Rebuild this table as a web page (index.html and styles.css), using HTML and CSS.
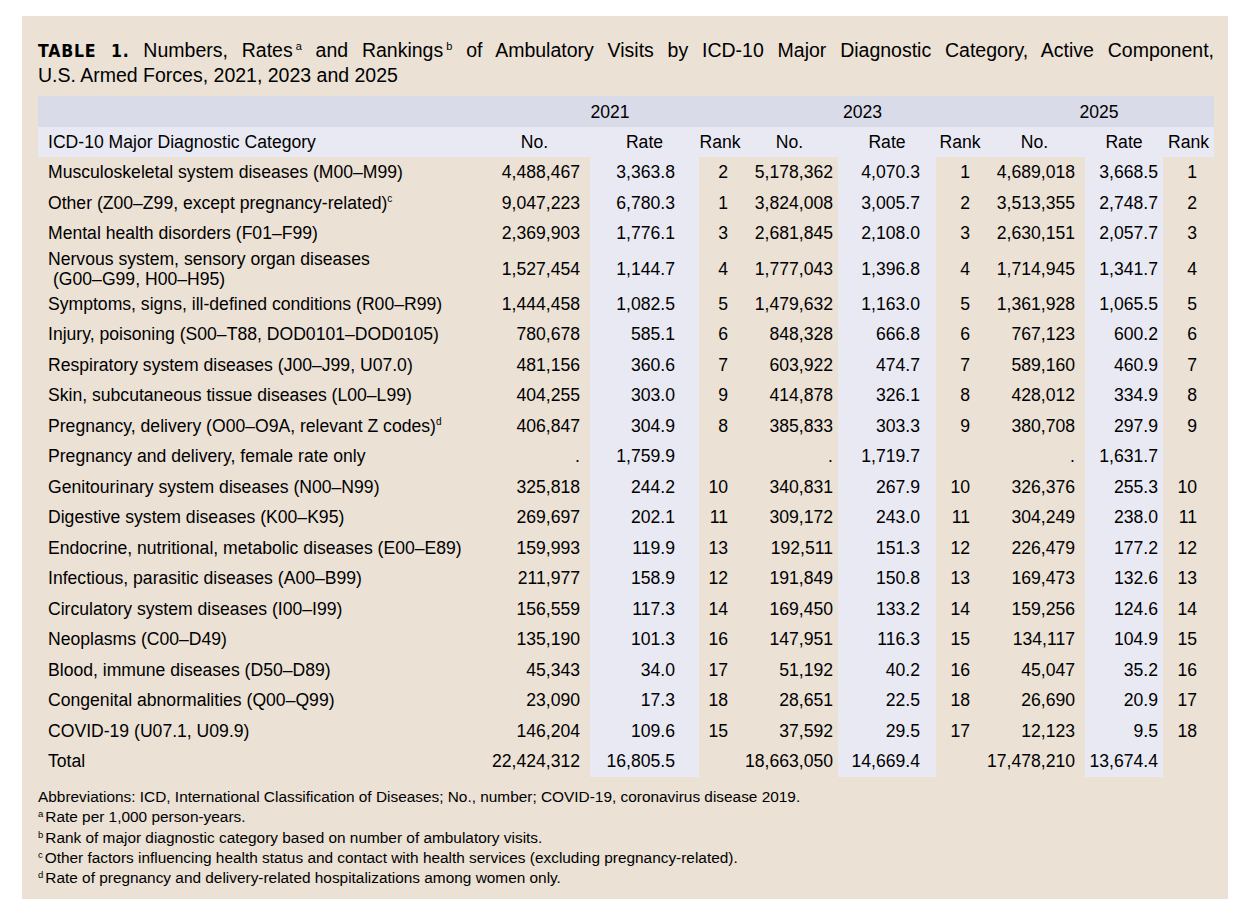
FILE: index.html
```html
<!DOCTYPE html>
<html lang="en">
<head>
    <meta charset="UTF-8">
    <meta name="viewport" content="width=device-width, initial-scale=1.0">
    <title>Table 1. Ambulatory Visits by ICD-10 Major Diagnostic Category</title>
    <link rel="stylesheet" href="styles.css">
</head>
<body>
    <div class="panel">
        <p class="title">
            <span class="title-line first"><span class="label">TABLE 1.</span> Numbers, Rates<sup>a</sup> and Rankings<sup>b</sup> of Ambulatory Visits by ICD-10 Major Diagnostic Category, Active Component,</span>
            <span class="title-line">U.S. Armed Forces, 2021, 2023 and 2025</span>
        </p>

        <table class="data-table">
            <colgroup>
                <col class="c-cat">
                <col class="c-no1">
                <col class="c-rate1 shade">
                <col class="c-rank1">
                <col class="c-no2">
                <col class="c-rate2 shade">
                <col class="c-rank2">
                <col class="c-no3">
                <col class="c-rate3 shade">
                <col class="c-rank3">
            </colgroup>
            <thead>
                <tr class="year-row">
                    <th></th>
                    <th colspan="3">2021</th>
                    <th colspan="3">2023</th>
                    <th colspan="3">2025</th>
                </tr>
                <tr class="head-row">
                    <th class="cat">ICD-10 Major Diagnostic Category</th>
                    <th>No.</th><th>Rate</th><th>Rank</th>
                    <th>No.</th><th>Rate</th><th>Rank</th>
                    <th>No.</th><th>Rate</th><th>Rank</th>
                </tr>
            </thead>
            <tbody>
                <tr><td>Musculoskeletal system diseases (M00–M99)</td><td>4,488,467</td><td>3,363.8</td><td>2</td><td>5,178,362</td><td>4,070.3</td><td>1</td><td>4,689,018</td><td>3,668.5</td><td>1</td></tr>
                <tr><td>Other (Z00–Z99, except pregnancy-related)<sup>c</sup></td><td>9,047,223</td><td>6,780.3</td><td>1</td><td>3,824,008</td><td>3,005.7</td><td>2</td><td>3,513,355</td><td>2,748.7</td><td>2</td></tr>
                <tr><td>Mental health disorders (F01–F99)</td><td>2,369,903</td><td>1,776.1</td><td>3</td><td>2,681,845</td><td>2,108.0</td><td>3</td><td>2,630,151</td><td>2,057.7</td><td>3</td></tr>
                <tr><td><span class="wrap">Nervous system, sensory organ diseases</span><span class="wrap indent">(G00–G99, H00–H95)</span></td><td>1,527,454</td><td>1,144.7</td><td>4</td><td>1,777,043</td><td>1,396.8</td><td>4</td><td>1,714,945</td><td>1,341.7</td><td>4</td></tr>
                <tr><td>Symptoms, signs, ill-defined conditions (R00–R99)</td><td>1,444,458</td><td>1,082.5</td><td>5</td><td>1,479,632</td><td>1,163.0</td><td>5</td><td>1,361,928</td><td>1,065.5</td><td>5</td></tr>
                <tr><td>Injury, poisoning (S00–T88, DOD0101–DOD0105)</td><td>780,678</td><td>585.1</td><td>6</td><td>848,328</td><td>666.8</td><td>6</td><td>767,123</td><td>600.2</td><td>6</td></tr>
                <tr><td>Respiratory system diseases (J00–J99, U07.0)</td><td>481,156</td><td>360.6</td><td>7</td><td>603,922</td><td>474.7</td><td>7</td><td>589,160</td><td>460.9</td><td>7</td></tr>
                <tr><td>Skin, subcutaneous tissue diseases (L00–L99)</td><td>404,255</td><td>303.0</td><td>9</td><td>414,878</td><td>326.1</td><td>8</td><td>428,012</td><td>334.9</td><td>8</td></tr>
                <tr><td>Pregnancy, delivery (O00–O9A, relevant Z codes)<sup>d</sup></td><td>406,847</td><td>304.9</td><td>8</td><td>385,833</td><td>303.3</td><td>9</td><td>380,708</td><td>297.9</td><td>9</td></tr>
                <tr><td>Pregnancy and delivery, female rate only</td><td>.</td><td>1,759.9</td><td></td><td>.</td><td>1,719.7</td><td></td><td>.</td><td>1,631.7</td><td></td></tr>
                <tr><td>Genitourinary system diseases (N00–N99)</td><td>325,818</td><td>244.2</td><td>10</td><td>340,831</td><td>267.9</td><td>10</td><td>326,376</td><td>255.3</td><td>10</td></tr>
                <tr><td>Digestive system diseases (K00–K95)</td><td>269,697</td><td>202.1</td><td>11</td><td>309,172</td><td>243.0</td><td>11</td><td>304,249</td><td>238.0</td><td>11</td></tr>
                <tr><td>Endocrine, nutritional, metabolic diseases (E00–E89)</td><td>159,993</td><td>119.9</td><td>13</td><td>192,511</td><td>151.3</td><td>12</td><td>226,479</td><td>177.2</td><td>12</td></tr>
                <tr><td>Infectious, parasitic diseases (A00–B99)</td><td>211,977</td><td>158.9</td><td>12</td><td>191,849</td><td>150.8</td><td>13</td><td>169,473</td><td>132.6</td><td>13</td></tr>
                <tr><td>Circulatory system diseases (I00–I99)</td><td>156,559</td><td>117.3</td><td>14</td><td>169,450</td><td>133.2</td><td>14</td><td>159,256</td><td>124.6</td><td>14</td></tr>
                <tr><td>Neoplasms (C00–D49)</td><td>135,190</td><td>101.3</td><td>16</td><td>147,951</td><td>116.3</td><td>15</td><td>134,117</td><td>104.9</td><td>15</td></tr>
                <tr><td>Blood, immune diseases (D50–D89)</td><td>45,343</td><td>34.0</td><td>17</td><td>51,192</td><td>40.2</td><td>16</td><td>45,047</td><td>35.2</td><td>16</td></tr>
                <tr><td>Congenital abnormalities (Q00–Q99)</td><td>23,090</td><td>17.3</td><td>18</td><td>28,651</td><td>22.5</td><td>18</td><td>26,690</td><td>20.9</td><td>17</td></tr>
                <tr><td>COVID-19 (U07.1, U09.9)</td><td>146,204</td><td>109.6</td><td>15</td><td>37,592</td><td>29.5</td><td>17</td><td>12,123</td><td>9.5</td><td>18</td></tr>
                <tr><td>Total</td><td>22,424,312</td><td>16,805.5</td><td></td><td>18,663,050</td><td>14,669.4</td><td></td><td>17,478,210</td><td>13,674.4</td><td></td></tr>
            </tbody>
        </table>

        <div class="notes">
            <p>Abbreviations: ICD, International Classification of Diseases; No., number; COVID-19, coronavirus disease 2019.</p>
            <p><sup>a</sup>Rate per 1,000 person-years.</p>
            <p><sup>b</sup>Rank of major diagnostic category based on number of ambulatory visits.</p>
            <p><sup>c</sup>Other factors influencing health status and contact with health services (excluding pregnancy-related).</p>
            <p><sup>d</sup>Rate of pregnancy and delivery-related hospitalizations among women only.</p>
        </div>
    </div>
</body>
</html>
```

FILE: styles.css
```css
* {
    margin: 0;
    padding: 0;
    box-sizing: border-box;
}
body {
    background: #ffffff;
    color: #000000;
    font-family: "Liberation Sans", Arial, sans-serif;
}
.panel {
    width: 1206px;
    margin: 16px 0 0 22px;
    padding: 22px 14px 11px 16px;
    background: #ebe1d5;
}

/* Title */
.title {
    font-size: 19.5px;
    line-height: 24.7px;
    margin-bottom: 8.6px;
}
.title-line {
    display: block;
}
.title-line.first {
    text-align: justify;
    text-align-last: justify;
}
.label {
    font-family: "Liberation Sans Narrow", "DejaVu Sans Condensed", sans-serif;
    font-weight: bold;
    font-size: 17.5px;
    letter-spacing: 0.8px;
    line-height: 1;
}
.title sup {
    font-size: 11px;
    line-height: 0;
    vertical-align: 7px;
    margin-left: 3px;
}

/* Table */
.data-table {
    width: 1176px;
    table-layout: fixed;
    border-collapse: collapse;
    font-size: 17.6px;
    line-height: 20px;
}
.c-cat { width: 441px; }
.c-no1 { width: 111px; }
.c-rate1 { width: 109px; }
.c-rank1 { width: 42px; }
.c-no2 { width: 97px; }
.c-rate2 { width: 98px; }
.c-rank2 { width: 48px; }
.c-no3 { width: 101px; }
.c-rate3 { width: 78px; }
.c-rank3 { width: 51px; }
.shade {
    background: #e9e9f3;
}
.data-table th {
    font-weight: normal;
    text-align: center;
    padding: 0;
}
.year-row {
    background: #dadbe9;
}
.year-row th {
    height: 31px;
}
.head-row {
    background: #e9e9f3;
}
.head-row th {
    height: 30px;
}
.head-row th.cat {
    text-align: left;
    padding-left: 10px;
}
.data-table td {
    height: 30.5px;
    padding: 0;
    text-align: right;
    vertical-align: middle;
    white-space: nowrap;
}
.data-table td:first-child {
    text-align: left;
    padding-left: 10px;
}
.data-table td:nth-child(2) { padding-right: 10px; }
.data-table td:nth-child(3) { padding-right: 24px; }
.data-table td:nth-child(4) { padding-right: 13px; }
.data-table td:nth-child(5) { padding-right: 5px; }
.data-table td:nth-child(6) { padding-right: 16px; }
.data-table td:nth-child(7) { padding-right: 14px; }
.data-table td:nth-child(8) { padding-right: 10px; }
.data-table td:nth-child(9) { padding-right: 5px; }
.data-table td:nth-child(10) { padding-right: 17px; }
.wrap {
    display: block;
}
.wrap.indent {
    padding-left: 5px;
}
.data-table sup {
    font-size: 10px;
    line-height: 0;
    vertical-align: 7px;
}

/* Footnotes */
.notes {
    margin-top: 10.6px;
    font-size: 15.4px;
    line-height: 20.2px;
}
.notes sup {
    font-size: 9.5px;
    line-height: 0;
    vertical-align: 5px;
    margin-right: 2px;
}
```
